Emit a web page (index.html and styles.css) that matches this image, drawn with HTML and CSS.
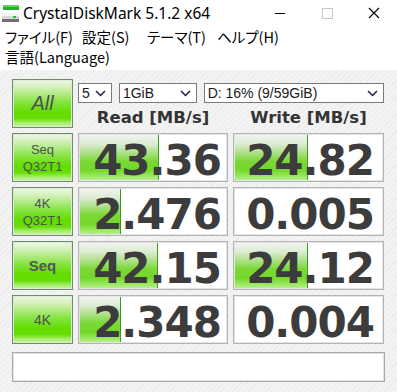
FILE: index.html
```html
<!DOCTYPE html>
<html lang="ja">
<head>
<meta charset="UTF-8">
<meta name="viewport" content="width=device-width, initial-scale=1.0">
<title>CrystalDiskMark 5.1.2 x64</title>
<link rel="stylesheet" href="styles.css">
</head>
<body>
<div id="window">
    <div class="titlebar">
        <svg class="app-icon" width="20" height="20" viewBox="0 0 20 20">
            <rect x="2" y="1" width="16" height="5" fill="#27b327"/>
            <rect x="2" y="1" width="16" height="2" fill="#5fd85f"/>
            <rect x="1" y="9" width="17" height="9" fill="#d8d8d8"/>
            <rect x="1" y="9" width="17" height="3" fill="#f4f4f4"/>
            <rect x="1" y="15" width="17" height="3" fill="#707070"/>
            <rect x="12" y="12" width="3" height="2" fill="#2fc02f"/>
        </svg>
        <span class="title">CrystalDiskMark 5.1.2 x64</span>
        <div class="controls">
            <svg class="ctl" width="46" height="20" viewBox="0 0 46 20"><line x1="18" y1="11.5" x2="28" y2="11.5" stroke="#000" stroke-width="1"/></svg>
            <svg class="ctl" width="46" height="20" viewBox="0 0 46 20"><rect x="18.5" y="6.5" width="10" height="10" fill="none" stroke="#c8c8c8" stroke-width="1"/></svg>
            <svg class="ctl" width="46" height="20" viewBox="0 0 46 20"><path d="M18 6 L28 16 M28 6 L18 16" stroke="#000" stroke-width="1.1"/></svg>
        </div>
    </div>
    <div class="menubar">
        <div class="menu-line">
            <span class="menu-item w1">ファイル(F)</span>
            <span class="menu-item w2">設定(S)</span>
            <span class="menu-item w3">テーマ(T)</span>
            <span class="menu-item">ヘルプ(H)</span>
        </div>
        <div class="menu-line">
            <span class="menu-item">言語(Language)</span>
        </div>
    </div>
    <div class="content">
        <div class="board">
            <div class="label all">All</div>
            <div class="head">
                <div class="selects">
                    <div class="select s-count">5<svg class="chev" width="11" height="7" viewBox="0 0 11 7"><path d="M1 1 L5.5 5.5 L10 1" fill="none" stroke="#1c1c40" stroke-width="1.5"/></svg></div>
                    <div class="select s-size">1GiB<svg class="chev" width="11" height="7" viewBox="0 0 11 7"><path d="M1 1 L5.5 5.5 L10 1" fill="none" stroke="#1c1c40" stroke-width="1.5"/></svg></div>
                    <div class="select s-drive">D: 16% (9/59GiB)<svg class="chev" width="11" height="7" viewBox="0 0 11 7"><path d="M1 1 L5.5 5.5 L10 1" fill="none" stroke="#1c1c40" stroke-width="1.5"/></svg></div>
                </div>
                <div class="col-heads">
                    <span>Read [MB/s]</span>
                    <span>Write [MB/s]</span>
                </div>
            </div>

            <div class="label small">Seq<br>Q32T1</div>
            <div class="cell read"><div class="bar" style="width:53%"></div><span class="num">43.36</span></div>
            <div class="cell write"><div class="bar" style="width:48%"></div><span class="num">24.82</span></div>

            <div class="label small">4K<br>Q32T1</div>
            <div class="cell read"><div class="bar" style="width:27%"></div><span class="num">2.476</span></div>
            <div class="cell write"><span class="num">0.005</span></div>

            <div class="label seq">Seq</div>
            <div class="cell read"><div class="bar" style="width:52%"></div><span class="num">42.15</span></div>
            <div class="cell write"><div class="bar" style="width:48%"></div><span class="num">24.12</span></div>

            <div class="label fourk">4K</div>
            <div class="cell read"><div class="bar" style="width:27%"></div><span class="num">2.348</span></div>
            <div class="cell write"><span class="num">0.004</span></div>
        </div>
        <div class="status"></div>
    </div>
</div>
</body>
</html>
```

FILE: styles.css
```css
body{
    margin: 0;
    background-color: #fff;
    font-family: "Noto Sans", "Noto Sans CJK JP", sans-serif;
}
#window{
    width: 397px;
    height: 392px;
    overflow: hidden;
}
.titlebar{
    height: 27px;
    display: flex;
    align-items: center;
}
.app-icon{
    margin-left: 1px;
    margin-top: 1px;
}
.title{
    margin-left: 2px;
    font-size: 15.5px;
    color: #000;
    margin-top: -1px;
}
.controls{
    margin-left: auto;
    display: flex;
    margin-top: -3px;
}
.ctl{
    display: block;
    margin-left: 1px;
}
.menubar{
    height: 43px;
    font-family: "Noto Sans CJK JP", sans-serif;
    font-feature-settings: "palt";
    font-size: 14.5px;
    color: #000;
}
.menu-line{
    height: 20px;
    line-height: 20px;
    padding-left: 5px;
    display: flex;
}
.menu-item{
    flex-shrink: 0;
}
.menu-item.w1{ width: 77px; }
.menu-item.w2{ width: 65px; }
.menu-item.w3{ width: 70px; }
.content{
    height: 322px;
    box-sizing: border-box;
    padding: 9px 12px 0 12px;
    background-color: #f1f1f1;
    background-image: repeating-linear-gradient(135deg, #f3f3f3 0 3px, #ebebeb 3px 4px);
}
.board{
    display: grid;
    grid-template-columns: 61px 150px 151px;
    grid-template-rows: repeat(5, 49px);
    column-gap: 5px;
    row-gap: 5px;
}
.label{
    box-sizing: border-box;
    border: 1px solid #6f8a6f;
    box-shadow: inset 0 0 0 1px #d9ecd0;
    background: linear-gradient(to bottom, #f2f7ee 0%, #c4eea4 22%, #8ae448 45%, #62dd00 68%, #66de06 82%, #a8ef70 92%, #c8f4a4 100%);
    display: flex;
    align-items: center;
    justify-content: center;
    text-align: center;
    color: #505050;
    font-family: "Liberation Sans", sans-serif;
}
.label.all{
    font-size: 20px;
    font-style: italic;
}
.label.small{
    font-size: 13px;
    line-height: 17px;
}
.label.seq{
    font-size: 15px;
    font-weight: bold;
    color: #555;
}
.label.fourk{
    font-size: 14px;
}
.head{
    grid-column: 2 / 4;
    display: flex;
    flex-direction: column;
}
.selects{
    display: flex;
    margin-top: 4px;
    gap: 7px;
}
.select{
    box-sizing: border-box;
    height: 20px;
    border: 1px solid #7a7a7a;
    background-color: #fff;
    font-family: "Liberation Sans", sans-serif;
    font-size: 14px;
    line-height: 18px;
    padding-left: 3px;
    color: #1a1a1a;
    display: flex;
    align-items: center;
}
.chev{
    margin-left: auto;
    margin-right: 5px;
}
.s-count{ width: 34px; }
.s-size{ width: 78px; }
.s-drive{ width: 181px; }
.col-heads{
    display: grid;
    grid-template-columns: 150px 151px;
    column-gap: 5px;
    text-align: center;
    font-family: "DejaVu Sans", sans-serif;
    font-weight: bold;
    font-size: 16.5px;
    line-height: 20px;
    color: #333;
    margin-top: 5px;
}
.cell{
    position: relative;
    box-sizing: border-box;
    border: 1px solid #b4b4b4;
    box-shadow: inset 0 0 0 1px #e4e4e4;
    background-color: #fff;
    text-align: right;
}
.bar{
    position: absolute;
    left: 1px;
    top: 1px;
    bottom: 1px;
    border-right: 1px solid #3c9a1c;
    background: linear-gradient(to bottom, #f0f4ee 0%, #dcebd2 20%, #a6df7c 42%, #7ad834 58%, #74d82a 78%, #96e65c 90%, #b8ee8e 100%);
}
.num{
    position: relative;
    display: block;
    font-family: "DejaVu Sans", sans-serif;
    font-weight: bold;
    font-size: 42px;
    letter-spacing: -1px;
    line-height: 38px;
    padding-top: 8px;
    color: #3c3c3c;
}
.read .num{ padding-right: 6px; }
.write .num{ padding-right: 9px; }
.status{
    box-sizing: border-box;
    margin-top: 8px;
    width: 373px;
    height: 30px;
    border: 1px solid #a8a8a8;
    box-shadow: inset 0 0 0 1px #e4e4e4;
    background-color: #fff;
}
```
